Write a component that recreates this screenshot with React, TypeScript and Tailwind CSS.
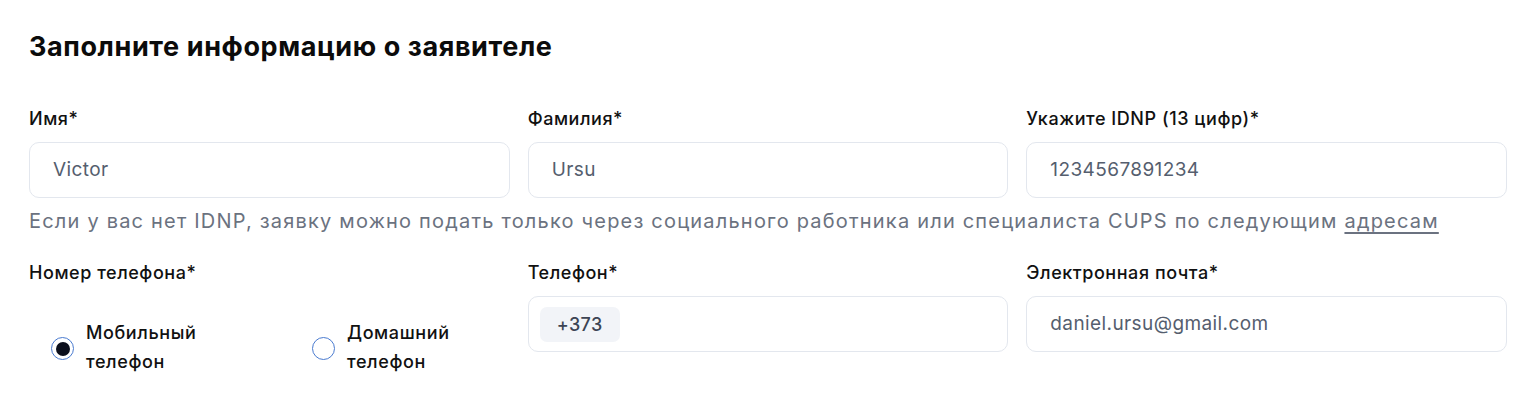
import React from "react";

const font = { fontFamily: "Inter, 'Noto Sans', sans-serif" };

function Label({ children }: { children: React.ReactNode }) {
  return (
    <label className="text-[18px] leading-[26px] font-medium text-[#111111] tracking-[0.55px]">{children}</label>
  );
}

function Field({ label, value }: { label: string; value: string }) {
  return (
    <div className="flex flex-col">
      <Label>{label}</Label>
      <div className="mt-[10px] h-[56px] rounded-[10px] border border-[#e3e7ee] bg-white flex items-center px-[23px] text-[19px] tracking-[0.4px] text-[#555e6e]">
        {value}
      </div>
    </div>
  );
}

function Radio({ checked, label1, label2 }: { checked?: boolean; label1: string; label2: string }) {
  return (
    <label className="w-[261px] shrink-0 flex items-center gap-[12px] cursor-pointer">
      <span className="w-[23px] h-[23px] rounded-full border-[1.5px] border-[#4a7bd0] flex items-center justify-center shrink-0 mt-[3px]">
        {checked && <span className="w-[14px] h-[14px] rounded-full bg-[#0b0f1c]" />}
      </span>
      <span className="text-[18px] leading-[29px] font-medium tracking-[0.6px] text-[#111111]">
        {label1}
        <br />
        {label2}
      </span>
    </label>
  );
}

export default function App() {
  return (
    <div className="bg-white w-[1536px] h-[405px] px-[29px] pt-[30px] overflow-hidden" style={font}>
      <h2 className="text-[27px] leading-[34px] font-bold text-[#0b0b0b] tracking-[0.6px]">
        Заполните информацию о заявителе
      </h2>

      <div className="grid grid-cols-3 gap-x-[18px] mt-[42px] w-[1478px]">
        <Field label="Имя*" value="Victor" />
        <Field label="Фамилия*" value="Ursu" />
        <Field label="Укажите IDNP (13 цифр)*" value="1234567891234" />
      </div>

      <p className="mt-[9px] text-[20px] leading-[28px] tracking-[1.2px] text-[#6b7280] whitespace-nowrap">
        Если у вас нет IDNP, заявку можно подать только через социального работника или специалиста CUPS по следующим{" "}
        <a className="underline underline-offset-[4px] decoration-[1.5px]">адресам</a>
      </p>

      <div className="grid grid-cols-3 gap-x-[18px] mt-[25px] w-[1478px]">
        <div className="flex flex-col">
          <Label>Номер телефона*</Label>
          <div className="flex pl-[22px] mt-[32px]">
            <Radio checked label1="Мобильный" label2="телефон" />
            <Radio label1="Домашний" label2="телефон" />
          </div>
        </div>
        <div className="flex flex-col">
          <Label>Телефон*</Label>
          <div className="mt-[10px] h-[56px] rounded-[10px] border border-[#e3e7ee] bg-white flex items-center px-[11px]">
            <span className="h-[35px] w-[80px] rounded-[7px] bg-[#f2f4f8] flex items-center justify-center text-[18px] tracking-[0.4px] font-medium text-[#3d4454]">
              +373
            </span>
          </div>
        </div>
        <Field label="Электронная почта*" value="daniel.ursu@gmail.com" />
      </div>
    </div>
  );
}
